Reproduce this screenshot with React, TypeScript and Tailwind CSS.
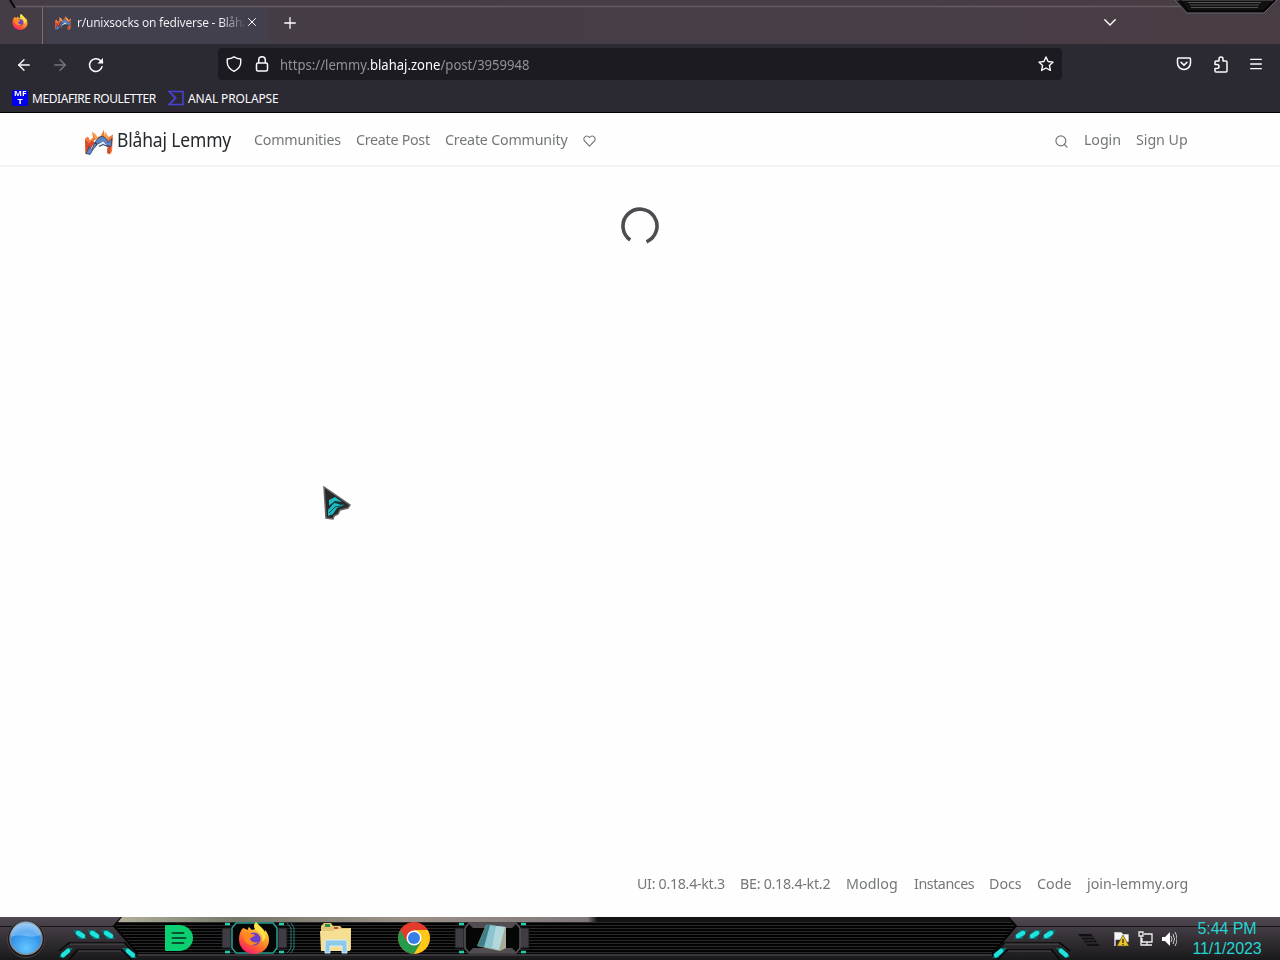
import { ArrowLeft, ArrowRight, Menu, Plus, X } from "lucide-react";

const navLinks = [
  { label: "Communities", width: "w-[87px]", tracking: "tracking-[-0.22px]" },
  { label: "Create Post", width: "w-[74px]", tracking: "tracking-[-0.28px]" },
  { label: "Create Community", width: "w-[123px]", tracking: "tracking-[-0.2px]" },
];

const footerLinks = [
  { label: "UI: 0.18.4-kt.3", width: "w-[88px]", tracking: "tracking-[-0.32px]" },
  { label: "BE: 0.18.4-kt.2", width: "w-[91px]", tracking: "tracking-[-0.28px]" },
  { label: "Modlog", width: "w-[53px]", tracking: "tracking-[0.1px]" },
  { label: "Instances", width: "w-[60px]", tracking: "tracking-[-0.46px]" },
  { label: "Docs", width: "w-[33px]", tracking: "tracking-normal" },
  { label: "Code", width: "w-[35px]", tracking: "tracking-normal" },
  { label: "join-lemmy.org", width: "w-[101px]", tracking: "tracking-normal" },
];

function NavText({ label, width, tracking }: { label: string; width: string; tracking: string }) {
  return (
    <span className={`whitespace-nowrap ${width}`}>
      <span className={`inline-block origin-left scale-x-95 ${tracking}`}>{label}</span>
    </span>
  );
}

function FirefoxIcon({ className }: { className?: string }) {
  return (
    <svg viewBox="0 0 32 32" className={className}>
      <defs>
        <linearGradient id="fox" x1="0.8" y1="0" x2="0.25" y2="1">
          <stop offset="0" stopColor="#fff44f" />
          <stop offset="0.35" stopColor="#ffb02e" />
          <stop offset="0.65" stopColor="#ff6a2b" />
          <stop offset="1" stopColor="#f5156c" />
        </linearGradient>
      </defs>
      <path
        fill="url(#fox)"
        d="M18 0c-2 3-2 5-1 7l-3 1-3-3c-1 1-1 2-1 3L5 6C2 9 1 13 1 17c0 9 7 15 15 15s15-6 15-14c0-5-2-8-4-10l-1 3c-1-5-5-7-8-11Z"
      />
      <circle cx="16" cy="17" r="6.500" fill="#6b3fd0" />
      <path fill="#ff8a20" d="M4 11c4-2 7-1 9 1 2 0 3 0 4 1-1 2-4 2-5 4 1 3 5 4 8 3-3 4-10 4-13-1-1-3-1-5-3-8Z" />
      <path fill="#ffe14a" d="M18 0c-3 3-2 6 0 8 4 3 8 6 6 12 4-3 4-7 3-9-1-5-6-7-9-11Z" />
    </svg>
  );
}

function BlahajLogo({ className }: { className?: string }) {
  return (
    <svg viewBox="0 0 28 26" className={className}>
      <path fill="#f07a3c" d="M0 25V9l3-2 2 4 3-3-1-6 3 3 2 3 4-2 3-6 0 6 4 2 5-3-1 17-2 3-3-1 1-9-6-7-8 3-5 9Z" />
      <path fill="#d4492c" d="M0 10l4 4 3-3 3 2-5 7-4 2ZM26 14l-1 10-3-1 1-7Z" />
      <path fill="#f9a14a" d="M8 3l2 7 3-1-2-4ZM20 2l-1 5 3 3 2-2Z" />
      <path
        fill="#5b87c8"
        stroke="#2c3a58"
        strokeWidth=".8"
        d="M1 24c1-3 3-4 3-7l3 3c2-6 5-12 10-13 3 0 5 3 6 6l4-4-1 8-4-1-3-3-6 1-5 6-3 5Z"
      />
      <path fill="#e9eff7" d="M13 15l5-3 4 4-4-1-5 2-4 5Z" />
      <path stroke="#2c3a58" strokeWidth="1.100" fill="none" d="M14 17l4-2 5 2M10 13l2 2" />
    </svg>
  );
}

function TitleBar() {
  return (
    <div className="relative flex h-11 items-end bg-linear-to-r from-[#453d45] via-[#463d47] to-[#493d45]">
      <svg viewBox="0 0 1280 16" className="absolute left-0 top-0 h-4 w-full" fill="none">
        <path d="M15 6.500H1184" stroke="#675b64" strokeWidth="1.500" />
        <path d="M10 0l5 8" stroke="#080808" strokeWidth="2" />
        <path d="M1175 0h102l-13 13h-77Z" fill="#111112" stroke="#68646a" />
        <path d="M1180 0l8 11h75l12-11" stroke="#050505" strokeWidth="1.500" />
        <path d="M1188 2.500h73M1190 5h69M1191 7.500h67" stroke="#5d5b5e" strokeWidth=".9" />
      </svg>
      <div className="flex h-[37px] w-[43px] items-start border-r border-[#77717a] pl-3 pt-[7px]">
        <FirefoxIcon className="size-4" />
      </div>
      <div className="ml-1 flex h-[37px] w-[221px] items-center bg-[#42404c] pb-1.5 pl-2">
        <BlahajLogo className="size-4 shrink-0" />
        <div className="ml-1.5 w-[167px] whitespace-nowrap bg-linear-to-r from-[#f5f4f7] from-86% to-[#57545f] bg-clip-text text-xs leading-5 tracking-[-0.23px] text-transparent">
          r/unixsocks on fediverse - Blåha
        </div>
        <X className="mb-0.5 ml-px size-3.5 shrink-0 text-white" strokeWidth={1.7} />
      </div>
      <Plus className="mb-3 ml-[13px] size-[18px] text-white" strokeWidth={1.700} />
      <svg viewBox="0 0 12 7" className="mb-[18px] ml-auto mr-[164px] h-[7px] w-3" fill="none" stroke="#fff" strokeWidth="1.400" strokeLinecap="round">
        <path d="M.8.8 6 6l5.200-5.200" />
      </svg>
    </div>
  );
}

function AddressBar() {
  return (
    <div className="flex h-10 items-center bg-[#2b2a33] text-[#fbfbfe]">
      <ArrowLeft className="ml-[15px] mt-px size-[18px]" strokeWidth={1.8} />
      <ArrowRight className="ml-[18px] mt-px size-[18px] text-[#77767e]" strokeWidth={1.8} />
      <svg viewBox="0 0 16 16" className="ml-[19px] mt-0.5 size-4" fill="none" stroke="currentColor" strokeWidth="1.500">
        <path d="M14.200 9.200A6.400 6.400 0 1 1 12.500 3.600L15 6" />
        <path d="M15 1v5.500H9.500Z" fill="currentColor" stroke="none" />
      </svg>
      <div className="ml-[114px] flex h-8 w-[844px] items-center rounded bg-[#1c1b22] px-2">
        <svg viewBox="0 0 16 16" className="size-4" fill="none" stroke="currentColor" strokeWidth="1.400" strokeLinejoin="round">
          <path d="M8 .8c2 1.300 4 2 6.700 2.200v3.800c0 4-2.600 6.500-6.700 8.500-4.100-2-6.700-4.500-6.700-8.500V3C4 2.800 6 2.100 8 .8Z" />
        </svg>
        <svg viewBox="0 0 14 16" className="ml-[13px] h-4 w-3.5" fill="none" stroke="currentColor" strokeWidth="1.500">
          <rect x="1.500" y="7" width="11" height="8" rx="1.500" />
          <path d="M3.700 7V4a3.300 3.300 0 0 1 6.600 0v3" />
        </svg>
        <div className="ml-[11px] mt-0.5 w-[268px] origin-left scale-x-[0.934] whitespace-nowrap text-sm leading-5 text-[#93929a]">
          https://lemmy.<span className="text-[#fbfbfe]">blahaj.zone</span>/post/3959948
        </div>
        <svg viewBox="0 0 16 16" className="ml-auto size-4" fill="none" stroke="currentColor" strokeWidth="1.400" strokeLinejoin="round">
          <path d="m8 1 2.100 4.500 5 .6-3.700 3.300 1 5L8 12l-4.400 2.400 1-5L.9 6.100l5-.6Z" />
        </svg>
      </div>
      <svg viewBox="0 0 16 16" className="ml-[114px] size-4" fill="none" stroke="currentColor" strokeWidth="1.500" strokeLinecap="round" strokeLinejoin="round">
        <path d="M2.500 2h11q1 0 1 1v4A6.500 6.500 0 0 1 1.500 7V3q0-1 1-1Z" />
        <path d="m5 6.200 3 2.900 3-2.900" />
      </svg>
      <svg viewBox="0 0 16 17" className="ml-[21px] h-[17px] w-4" fill="none" stroke="currentColor" strokeWidth="1.500" strokeLinejoin="round">
        <path d="M2 8.500V6q0-1 1-1h3V3a2 2 0 0 1 4 0v2h3q1 0 1 1v9q0 1-1 1H3q-1 0-1-1v-2.500h2a2 2 0 0 0 0-4Z" />
      </svg>
      <Menu className="ml-[19px] size-4" strokeWidth={2} />
    </div>
  );
}

function Bookmarks() {
  return (
    <div className="flex h-[29px] items-center border-b border-black bg-[#2b2a33] pl-3 text-xs text-[#fbfbfe]">
      <div className="flex size-4 flex-col items-center rounded-xs bg-[#0000ed] text-[7px] font-bold leading-[8px]">
        <span className="scale-x-120">MF</span>
        <span className="scale-x-130">T</span>
      </div>
      <span className="ml-1 mt-0.5 w-[125px] whitespace-nowrap tracking-[-0.43px]">MEDIAFIRE ROULETTER</span>
      <svg viewBox="0 0 16 16" className="ml-[11px] size-4" fill="none" stroke="#4942d9">
        <path d="M1 1.500h14v13H1l6-6.500Z" strokeWidth="1.500" />
        <path d="M3.500 3 8.500 8l-5 5" strokeWidth="1" />
      </svg>
      <span className="ml-1 mt-0.5 whitespace-nowrap tracking-[-0.15px]">ANAL PROLAPSE</span>
    </div>
  );
}

function LemmyPage() {
  return (
    <div className="relative flex h-[804px] flex-col bg-[#fefefe] text-[15px] leading-6 text-[#747779]">
      <nav className="flex h-[54px] items-center border-b-2 border-[#f3f3f3] pl-[85px] pr-[92px]">
        <BlahajLogo className="mt-1.5 h-[27px] w-7" />
        <span className="ml-1 mt-0.5 w-[115px] whitespace-nowrap text-[19px] text-[#25282a]">
          <span className="inline-block origin-left scale-x-[0.92] tracking-[-0.17px]">Blåhaj Lemmy</span>
        </span>
        <div className="ml-[22px] flex gap-[15px]">
          {navLinks.map((link) => (
            <NavText key={link.label} {...link} />
          ))}
        </div>
        <svg viewBox="0 0 14 13" className="ml-[15px] mt-1 h-3 w-[13px]" fill="none" stroke="currentColor" strokeWidth="1.200" strokeLinejoin="round">
          <path d="M7 12 1.700 6.500C-1 3.500 3.500-1.200 7 2.700c3.500-3.900 8 .8 5.300 3.800Z" />
        </svg>
        <svg viewBox="0 0 14 14" className="ml-auto mr-px mt-1 size-[13px]" fill="none" stroke="currentColor" strokeWidth="1.300" strokeLinecap="round">
          <circle cx="6.300" cy="6.300" r="5.300" />
          <path d="m10.200 10.200 2.800 2.800" />
        </svg>
        <div className="ml-[15px] flex gap-[15px]">
          <NavText label="Login" width="w-[37px]" tracking="tracking-[-0.1px]" />
          <NavText label="Sign Up" width="w-[52px]" tracking="tracking-[-0.05px]" />
        </div>
      </nav>

      <svg viewBox="0 0 38 38" className="mx-auto mt-10 size-[38px]" fill="none" stroke="#4b4d50" strokeWidth="3.600">
        <path d="M9.200 33A17 17 0 1 1 25.500 34.800" />
      </svg>

      <footer className="mb-[22px] mt-auto flex justify-end gap-[15px] pr-[92px]">
        {footerLinks.map((link) => (
          <NavText key={link.label} {...link} />
        ))}
      </footer>

      <svg viewBox="0 0 28 34" className="absolute left-[323px] top-[373px] h-[34px] w-7">
        <path d="M1 1 27 19l-2 3-8 2-2 4-4 2-1 3-7-1Z" fill="#29282a" stroke="#666" strokeWidth="1.500" />
        <path d="M6 14l6-3 7 5-7-1-6 5ZM5 24l6-7 11 2-8 3-4 6-5 2Z" fill="#19bec4" />
        <path d="M6 20l6-4 9 4M6 27l6-6 6-1" stroke="#0e454d" fill="none" />
      </svg>
    </div>
  );
}

function Lights() {
  return (
    <svg viewBox="0 0 82 38" className="h-[38px] w-[82px]">
      <g fill="none" stroke="#080808" strokeWidth="1.500">
        <path d="M1 29 11 21h56l12 14M11 38l8-10h45l10 10" />
        <path d="M12 22h54M20 29h43" stroke="#67616a" strokeWidth=".7" />
      </g>
      <g fill="#0a6f70">
        <path d="M15 8h8l6 9h-8ZM29 8h8l6 9h-8ZM43 8h8l6 9h-8ZM1 35l8-9h6l-9 10ZM64 26h6l9 10h-6Z" />
      </g>
      <g stroke="#1ee4de" strokeWidth="4.500" strokeLinecap="round">
        <path d="m20 11 5 3M34 11l5 3M48 11l5 3M5 33l5-4M70 29l5 4" />
      </g>
    </svg>
  );
}

function TaskFrame({ active = false, children }: { active?: boolean; children: React.ReactNode }) {
  return (
    <div className="relative flex h-8 w-[74px] items-center justify-center">
      <svg viewBox="0 0 74 32" className="absolute inset-0 h-8 w-[74px] overflow-visible">
        <path d="M0 6h9v20H0ZM56 6h9v20h-9Z" fill="#403c43" stroke="#19181a" />
        {!active && <path d="M65 6h9v20h-9Z" fill="#403c43" stroke="#19181a" />}
        <path
          d={active ? "M14 1h37l4 5v20l-4 5H14l-4-5V6Z" : "M14 1h47l4 5v20l-4 5H14l-4-5V6Z"}
          fill="#050606"
          stroke={active ? "#299e91" : "#5b5559"}
          strokeWidth="1.500"
        />
        {active && <path d="M65 1l4 5v20l-4 5M69 1l3 5v20l-3 5" fill="none" stroke="#277d76" />}
        {!active && <path d="M13 1h49l-5 5H18ZM18 26h39l5 5H13Z" fill="#514c50" />}
        <path d={active ? "M3 2h5M57 2h5M3 30h5M57 30h5" : "M4 2h5M66 2h5M4 30h5M66 30h5"} stroke="#24cfae" strokeWidth="2.500" />
      </svg>
      <div className="relative">{children}</div>
    </div>
  );
}

function Taskbar() {
  return (
    <div className="relative flex h-[43px] items-center overflow-hidden bg-[#2d2a2f]">
      <svg viewBox="0 0 1280 43" className="absolute inset-0 h-[43px] w-full">
        <defs>
          <linearGradient id="bar" x2="0" y2="1">
            <stop offset="0" stopColor="#514952" />
            <stop offset=".22" stopColor="#443d45" />
            <stop offset="1" stopColor="#19191b" />
          </linearGradient>
          <linearGradient id="glass">
            <stop offset="0" stopColor="#b1b19c" />
            <stop offset=".25" stopColor="#77776a" />
            <stop offset=".6" stopColor="#9b9188" />
            <stop offset=".98" stopColor="#80777a" />
            <stop offset="1" stopColor="#171619" />
          </linearGradient>
          <pattern id="stripes" width="4" height="3" patternUnits="userSpaceOnUse">
            <path d="M0 0h4v2H0z" fill="#030303" />
            <path d="M0 2h4v1H0z" fill="#29292b" />
          </pattern>
        </defs>
        <path d="M0 0h1280v43H0z" fill="url(#bar)" />
        <path d="M0 9.500h114M1016 9.500h264" stroke="#171518" />
        <path d="M122 0h886l8 9-24 28H138L114 9Z" fill="url(#stripes)" stroke="#070707" strokeWidth="2" />
        <path d="M122 0h475v5H118Z" fill="url(#glass)" />
        <path d="M597 0h411l4 5H597Z" fill="#131214" />
        <path d="M138 38h854" stroke="#38363a" strokeWidth="2" />
      </svg>
      <svg viewBox="0 0 40 40" className="relative ml-1.5 size-10 shrink-0">
        <defs>
          <radialGradient id="orb" cx=".5" cy=".8" r=".75">
            <stop stopColor="#65c6ff" />
            <stop offset=".7" stopColor="#2f90e8" />
            <stop offset="1" stopColor="#86bdf3" />
          </radialGradient>
        </defs>
        <circle cx="20" cy="20" r="18.500" fill="#171719" stroke="#48434a" />
        <circle cx="20" cy="19.500" r="16" fill="url(#orb)" stroke="#8b8c90" strokeWidth="1.500" />
        <path d="M5 18a15 15 0 0 1 30-2q-8 3-15 1-8-2-15 1Z" fill="#b3dcff" opacity=".4" />
      </svg>
      <div className="relative ml-3 mt-1"><Lights /></div>
      <svg viewBox="0 0 30 28" className="relative -mt-0.5 ml-6 h-7 w-[30px]">
        <path d="M2 1h13a14 13 0 0 1 0 26H2q-1 0-1-1V2q0-1 1-1Z" fill="#0bd071" />
        <path d="M8.500 9h11M8.500 14h13M8.500 19h11" stroke="#075332" strokeWidth="2" strokeLinecap="round" />
      </svg>
      <div className="relative -mt-0.5 ml-7">
        <TaskFrame active><FirefoxIcon className="-ml-2.5 size-8" /></TaskFrame>
      </div>
      <svg viewBox="0 0 34 32" className="relative -mt-px ml-[23px] h-8 w-[34px]">
        <path d="M2 4 5 1h7l2 3h7l2 2h9v22H2Z" fill="#e1c776" />
        <path d="M6 2h5v3H6Z" fill="#2b8f4a" />
        <path d="M15 5h4v2h-4Z" fill="#c34837" />
        <path d="M23 7h4v2h-4Z" fill="#4388c9" />
        <path d="M1 9h13l2-2h16l-1 22H2Z" fill="#f6df93" />
        <path d="M6 31V20q0-2 2-2h18q2 0 2 2v11h-5v-7H11v7Z" fill="#8ec9e9" stroke="#d5f1fc" />
      </svg>
      <svg viewBox="0 0 32 32" className="relative -mt-0.5 ml-[45px] size-8">
        <circle cx="16" cy="16" r="16" fill="#e33b2e" />
        <path d="M2.200 8A16 16 0 0 0 16 32l7-12-14 0Z" fill="#269c4b" />
        <path d="M16 8h13.800A16 16 0 0 1 16 32l7-12Z" fill="#fbc916" />
        <circle cx="16" cy="16" r="7.500" fill="#fff" />
        <circle cx="16" cy="16" r="6" fill="#367ee8" />
      </svg>
      <div className="relative -mt-0.5 ml-[25px]">
        <TaskFrame>
          <svg viewBox="0 0 32 28" className="h-7 w-8">
            <path d="M10 1 1 22l23 5 6-3V3Z" fill="#a8a996" />
            <path d="M11 0 1 22l8 1L17 1Z" fill="#417f88" />
            <path d="m14 1 15 2-6 23-15-3Z" fill="#8bc5cf" />
            <path d="m20 2 9 1-6 23-7-2Z" fill="#d0e2e3" opacity=".6" />
          </svg>
        </TaskFrame>
      </div>
      <div className="relative ml-auto mr-1.5 mt-1 -scale-x-100"><Lights /></div>
      <svg viewBox="0 0 24 12" className="relative mr-3 mt-0.5 h-3 w-6 shrink-0">
        <path d="M1 0h13l9 12H11Z" fill="#111013" />
        <path d="M3 3h13M6 6h12M9 9h12" stroke="#3f3b42" />
      </svg>
      <svg viewBox="0 0 64 18" className="relative mr-[11px] h-[18px] w-16 shrink-0" fill="none">
        <path d="M2 2v14M3 3h5l2 2h5v6h-5l-2-2H3Z" fill="#f5f5f5" stroke="#f5f5f5" strokeWidth="1.300" />
        <path d="m10 5-6 11h12Z" fill="#edc328" stroke="#594718" strokeWidth=".6" />
        <path d="M10 9v4M10 14v1" stroke="#2a2510" strokeWidth="1.300" />
        <path d="M31 4h8v8H29v-4M34 12v3M30 15h9M26 2h4v4h-4ZM28 6v9h3" stroke="#eee" strokeWidth="1.300" />
        <path d="M49 7h3l5-5v14l-5-5h-3Z" fill="#fff" />
        <path d="M58 6q2 3 0 6M60 4q3 5 0 10M62 2q4 7 0 14" stroke="#ccc" />
      </svg>
      <div className="relative mr-3.5 w-[78px] whitespace-nowrap text-center font-['Liberation_Sans'] text-base leading-5 tracking-[-0.1px] text-[#24d4d3]">
        <p>5:44 PM</p>
        <p>11/1/2023</p>
      </div>
    </div>
  );
}

export default function App() {
  return (
    <div className="h-[960px] w-[1280px] overflow-hidden bg-[#fefefe] font-['Noto_Sans','Open_Sans',sans-serif]">
      <TitleBar />
      <AddressBar />
      <Bookmarks />
      <LemmyPage />
      <Taskbar />
    </div>
  );
}
